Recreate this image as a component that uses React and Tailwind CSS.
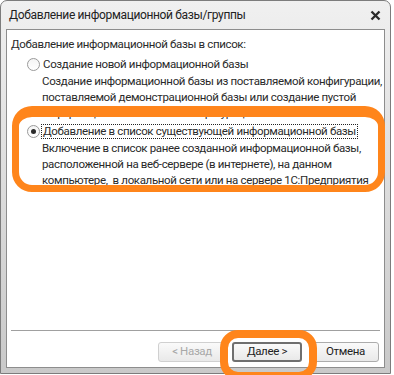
import React from 'react';

const Radio = ({ checked }) => (
  <span className="relative mr-[2px] flex h-[13px] w-[13px] shrink-0 items-center justify-center rounded-full border border-[#9a9a9a] bg-gradient-to-b from-[#f4f4f4] to-[#ffffff]">
    {checked && <span className="h-[5px] w-[5px] rounded-full bg-[#2b2b2b]" />}
  </span>
);

const Option = ({ checked, focused, label, children }) => (
  <div className="pl-[20px]">
    <div className="flex h-[16px] items-center">
      <Radio checked={checked} />
      <span
        className={`px-[1px] leading-[13px] ${
          focused ? 'outline outline-1 outline-dotted outline-[#222]' : ''
        }`}
      >
        {label}
      </span>
    </div>
    <p className="mt-[1px] pl-[15px] leading-[16px]">{children}</p>
  </div>
);

const Button = ({ children, disabled, primary, className = '' }) => (
  <button
    className={`flex h-[20px] items-center justify-center rounded-[3px] bg-gradient-to-b from-[#fafafa] to-[#e9e9e9] ${
      disabled
        ? 'border border-[#d0d0d0] text-[#a8a8a8]'
        : primary
        ? 'border-2 border-[#6f6f6f] text-[#222]'
        : 'border border-[#acacac] text-[#222]'
    } ${className}`}
  >
    {children}
  </button>
);

export default function App() {
  return (
    <div className="relative h-[375px] w-[394px] overflow-hidden whitespace-nowrap bg-white font-['Roboto',Arial,sans-serif] text-[11.5px] tracking-[-0.35px] text-[#2a2a2a]">
      <div className="flex h-[374px] w-[391px] flex-col rounded-t-[7px] border border-[#7c7c7c] bg-gradient-to-b from-[#f0f0f0] via-[#dcdcdc] to-[#c9c9c9] px-[5px] pb-[5px]">
        <div className="flex h-[28px] shrink-0 items-center justify-between pl-[3px] pr-[3px]">
          <span className="text-[12px] text-[#222]">Добавление информационной базы/группы</span>
          <svg width="11" height="11" viewBox="0 0 11 11" className="mr-[1px]">
            <path d="M1.5 1.5 L9.5 9.5 M9.5 1.5 L1.5 9.5" stroke="#2a2a2a" strokeWidth="2.3" />
          </svg>
        </div>
        <div className="flex flex-1 flex-col border border-[#8d8d8d] bg-white">
          <div className="pl-[4px] pt-[6px] leading-[16px]">Добавление информационной базы в список:</div>
          <div className="mt-[4px]">
            <Option label="Создание новой информационной базы">
              Создание информационной базы из поставляемой конфигурации,
              <br />
              поставляемой демонстрационной базы или создание пустой
              <br />
              информационной базы без конфигурации
            </Option>
          </div>
          <div className="mt-[2px]">
            <Option checked focused label="Добавление в список существующей информационной базы">
              Включение в список ранее созданной информационной базы,
              <br />
              расположенной на веб-сервере (в интернете), на данном
              <br />
              компьютере,&nbsp; в локальной сети или на сервере 1С:Предприятия
            </Option>
          </div>
          <div className="flex-1" />
          <div className="mx-[4px] h-px bg-[#a0a0a0]" />
          <div className="flex justify-end gap-[6px] px-[5px] pb-[5px] pt-[11px]">
            <Button disabled className="w-[68px]">&lt; Назад</Button>
            <Button primary className="mr-[4px] w-[70px]">Далее &gt;</Button>
            <Button className="w-[67px]">Отмена</Button>
          </div>
        </div>
      </div>

      <div className="pointer-events-none absolute left-[12px] top-[106px] h-[86px] w-[373px] rounded-[20px] border-[7px] border-t-[11px] border-[#ff851b]" />
      <div className="pointer-events-none absolute left-[220px] top-[330px] h-[50px] w-[97px] rounded-[18px] border-[8px] border-[#ff851b]" />
    </div>
  );
}
